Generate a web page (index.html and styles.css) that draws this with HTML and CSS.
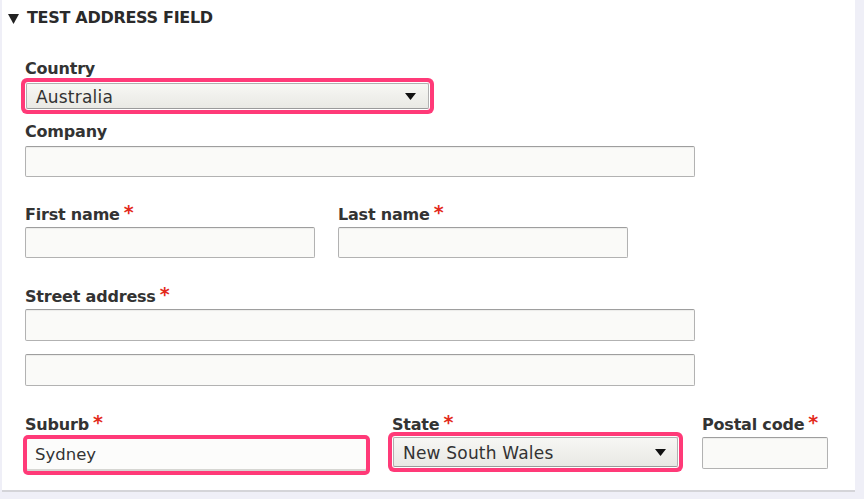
FILE: index.html
```html
<!DOCTYPE html>
<html>
<head>
<meta charset="utf-8">
<link rel="stylesheet" href="styles.css">
</head>
<body>
<div class="fieldset">
  <div class="legend">
    <svg class="tri" width="11" height="10" viewBox="0 0 11 10"><polygon points="0,0 11,0 5.5,10" fill="#222"/></svg>
    <span class="legend-text">TEST ADDRESS FIELD</span>
  </div>
  <div class="content">
    <div class="field country">
      <div class="lbl">Country</div>
      <div class="select hl country-select"><span class="sel-text">Australia</span><svg class="arrow" width="11" height="7" viewBox="0 0 11 7"><polygon points="0,0 11,0 5.5,7" fill="#111"/></svg></div>
    </div>
    <div class="field company">
      <div class="lbl">Company</div>
      <div class="input wide"></div>
    </div>
    <div class="row names">
      <div class="field">
        <div class="lbl">First name<span class="req">*</span></div>
        <div class="input half"></div>
      </div>
      <div class="field">
        <div class="lbl">Last name<span class="req">*</span></div>
        <div class="input half"></div>
      </div>
    </div>
    <div class="field street">
      <div class="lbl">Street address<span class="req">*</span></div>
      <div class="input wide"></div>
      <div class="input wide second"></div>
    </div>
    <div class="locality">
      <div class="field">
        <div class="lbl">Suburb<span class="req">*</span></div>
        <div class="input suburb">Sydney</div>
      </div>
      <div class="field">
        <div class="lbl">State<span class="req">*</span></div>
        <div class="select hl state-select"><span class="sel-text">New South Wales</span><svg class="arrow" width="11" height="7" viewBox="0 0 11 7"><polygon points="0,0 11,0 5.5,7" fill="#111"/></svg></div>
      </div>
      <div class="field">
        <div class="lbl">Postal code<span class="req">*</span></div>
        <div class="input postal"></div>
      </div>
    </div>
  </div>
</div>
</body>
</html>
```
FILE: styles.css
```css
html, body {
  margin: 0;
  padding: 0;
}
body {
  background: #efeff7;
  font-family: "DejaVu Sans", Verdana, sans-serif;
  color: #333;
  width: 864px;
  height: 499px;
  overflow: hidden;
}
.fieldset {
  margin-left: 2px;
  width: 853px;
  background: #fff;
  border-bottom: 2px solid #d4d4d8;
  padding-top: 8px;
  padding-bottom: 17px;
}
.legend {
  display: flex;
  align-items: center;
  padding-left: 6px;
  height: 20px;
}
.tri {
  display: block;
  margin-right: 8px;
  margin-top: 1px;
}
.legend-text {
  font-weight: bold;
  font-size: 16px;
  line-height: 20px;
  color: #2a2a2a;
  letter-spacing: -0.3px;
}
.content {
  padding-left: 23px;
}
.lbl {
  font-weight: bold;
  font-size: 16px;
  line-height: 20px;
  height: 20px;
  margin-bottom: 4px;
  color: #333;
  letter-spacing: -0.2px;
  white-space: nowrap;
}
.req {
  color: #e32a1c;
  font-size: 19px;
  margin-left: 4px;
  position: relative;
  top: -1px;
}
.field.country {
  margin-top: 31px;
}
.field.company {
  margin-top: 13px;
}
.row.names {
  margin-top: 26px;
  display: flex;
  gap: 23px;
}
.field.street {
  margin-top: 27px;
}
.locality {
  margin-top: 27px;
  display: grid;
  grid-template-columns: 343px 286px 126px;
  column-gap: 24px;
}
.input {
  box-sizing: border-box;
  height: 31px;
  background: #fafaf8;
  border: 1px solid #b2b2b2;
  border-top-color: #9e9e9e;
  border-radius: 2px;
  box-shadow: inset 0 1px 1px rgba(0,0,0,0.06);
  font-size: 16px;
  line-height: 28px;
  padding-left: 8px;
  color: #333;
}
.input.wide {
  width: 670px;
}
.street .input.wide {
  height: 32px;
}
.input.second {
  margin-top: 13px;
}
.input.half {
  width: 290px;
}
.input.postal {
  width: 126px;
  height: 32px;
}
.input.suburb {
  width: 343px;
  height: 36px;
  border: 2px solid #ff3a78;
  border-radius: 3px;
  box-shadow: 0 0 0 2px #ff3a78, inset 0 -2px 0 #d6d6d2;
  line-height: 31px;
  padding-left: 8px;
  background: #fcfcfb;
  font-size: 16.5px;
}
.select {
  box-sizing: border-box;
  display: flex;
  align-items: center;
  justify-content: space-between;
  background: linear-gradient(#f7f7f4, #e9e9e4);
  border: 1px solid #b0b0b0;
  border-bottom-color: #9a9a9a;
  border-radius: 2px;
  font-size: 17px;
  letter-spacing: 0.2px;
  color: #333;
  padding-left: 9px;
  padding-right: 12px;
}
.sel-text {
  padding-top: 2px;
}
.select .arrow {
  display: block;
}
.hl {
  box-shadow: 0 0 0 1px #fff, 0 0 0 5px #ff3a78;
}
.country-select {
  margin-left: 1px;
  width: 403px;
  height: 26px;
}
.state-select {
  margin-left: 1px;
  width: 285px;
  height: 30px;
  padding-right: 11px;
}
```
